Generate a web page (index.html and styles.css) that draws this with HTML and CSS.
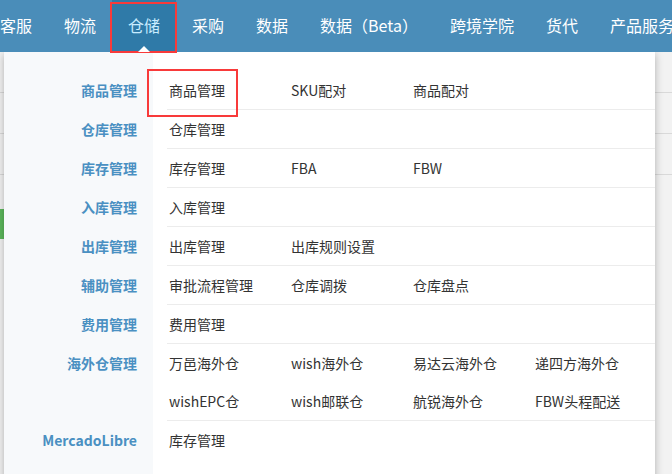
FILE: index.html
```html
<!DOCTYPE html>
<html lang="zh-CN">
<head>
    <meta charset="UTF-8">
    <meta name="viewport" content="width=device-width, initial-scale=1.0">
    <title>仓储菜单</title>
    <link rel="stylesheet" href="styles.css">
</head>
<body>
    <!-- 顶部导航 -->
    <div class="nav">
        <div class="nav-item">客服</div>
        <div class="nav-item">物流</div>
        <div class="nav-item active">仓储</div>
        <div class="nav-item">采购</div>
        <div class="nav-item">数据</div>
        <div class="nav-item">数据（Beta）</div>
        <div class="nav-item">跨境学院</div>
        <div class="nav-item">货代</div>
        <div class="nav-item">产品服务</div>
    </div>

    <!-- 页面背景 -->
    <div class="page">
        <div class="page-line"></div>
        <div class="page-line"></div>
        <div class="page-line"></div>
        <div class="page-green"></div>
    </div>

    <!-- 下拉菜单 -->
    <div class="dropdown">
        <div class="menu-row">
            <div class="menu-label">商品管理</div>
            <div class="menu-links">
                <a class="highlight">商品管理</a>
                <a>SKU配对</a>
                <a>商品配对</a>
            </div>
        </div>
        <div class="menu-row">
            <div class="menu-label">仓库管理</div>
            <div class="menu-links"><a>仓库管理</a></div>
        </div>
        <div class="menu-row">
            <div class="menu-label">库存管理</div>
            <div class="menu-links">
                <a>库存管理</a>
                <a>FBA</a>
                <a>FBW</a>
            </div>
        </div>
        <div class="menu-row">
            <div class="menu-label">入库管理</div>
            <div class="menu-links"><a>入库管理</a></div>
        </div>
        <div class="menu-row">
            <div class="menu-label">出库管理</div>
            <div class="menu-links">
                <a>出库管理</a>
                <a>出库规则设置</a>
            </div>
        </div>
        <div class="menu-row">
            <div class="menu-label">辅助管理</div>
            <div class="menu-links">
                <a>审批流程管理</a>
                <a>仓库调拨</a>
                <a>仓库盘点</a>
            </div>
        </div>
        <div class="menu-row">
            <div class="menu-label">费用管理</div>
            <div class="menu-links"><a>费用管理</a></div>
        </div>
        <div class="menu-row">
            <div class="menu-label">海外仓管理</div>
            <div class="menu-links">
                <a>万邑海外仓</a>
                <a>wish海外仓</a>
                <a>易达云海外仓</a>
                <a>递四方海外仓</a>
                <a>wishEPC仓</a>
                <a>wish邮联仓</a>
                <a>航锐海外仓</a>
                <a>FBW头程配送</a>
            </div>
        </div>
        <div class="menu-row">
            <div class="menu-label">MercadoLibre</div>
            <div class="menu-links"><a>库存管理</a></div>
        </div>
    </div>
</body>
</html>
```

FILE: styles.css
```css
body {
    margin: 0;
    padding: 0;
    font-family: "Noto Sans CJK SC", "Noto Sans", sans-serif;
    background-color: #f2f2f2;
    overflow: hidden;
    height: 474px;
    position: relative;
}
.nav {
    display: flex;
    height: 52px;
    margin-left: -16px;
    background-color: #4a8db9;
    position: relative;
    z-index: 3;
}
.nav-item {
    padding: 0 16px;
    line-height: 51px;
    font-size: 16px;
    color: #fff;
    white-space: nowrap;
    position: relative;
}
.nav-item.active {
    background-color: #2f7aa8;
    color: #c8ecff;
}
.nav-item.active::before {
    content: "";
    position: absolute;
    left: -2px;
    right: -1px;
    top: 2px;
    bottom: -1px;
    border: 2px solid #f83a3a;
}
.nav-item.active::after {
    content: "";
    position: absolute;
    left: 50%;
    bottom: 0;
    margin-left: -6px;
    border-left: 6px solid transparent;
    border-right: 6px solid transparent;
    border-bottom: 6px solid #fff;
}
.page {
    position: absolute;
    top: 52px;
    left: 0;
    right: 0;
    bottom: 0;
}
.page-line {
    height: 40px;
    border-bottom: 1px solid #d9d9d9;
}
.page-green {
    width: 10px;
    height: 30px;
    margin-top: 34px;
    background-color: #5cb85c;
}
.dropdown {
    position: absolute;
    top: 52px;
    left: 4px;
    width: 651px;
    height: 440px;
    padding-top: 19px;
    box-sizing: border-box;
    background: linear-gradient(to right, #f7f9fb 149px, #fff 149px);
    box-shadow: 0 2px 8px rgba(0, 0, 0, 0.28);
    z-index: 2;
}
.menu-row {
    display: flex;
}
.menu-label {
    width: 149px;
    padding-right: 14px;
    box-sizing: border-box;
    text-align: right;
    font-size: 14px;
    font-weight: bold;
    color: #4a90c2;
    line-height: 38px;
}
.menu-links {
    flex: 1;
    margin-left: 16px;
    display: grid;
    grid-template-columns: repeat(4, 122px);
    border-bottom: 1px solid #ececec;
}
.menu-row:last-child .menu-links {
    border-bottom: none;
}
.menu-links a {
    padding-left: 2px;
    font-size: 14px;
    color: #333;
    line-height: 38px;
    white-space: nowrap;
    position: relative;
}
.menu-links a.highlight::after {
    content: "";
    position: absolute;
    left: -20px;
    top: -2px;
    width: 87px;
    height: 44px;
    border: 2px solid #f83a3a;
}
```
